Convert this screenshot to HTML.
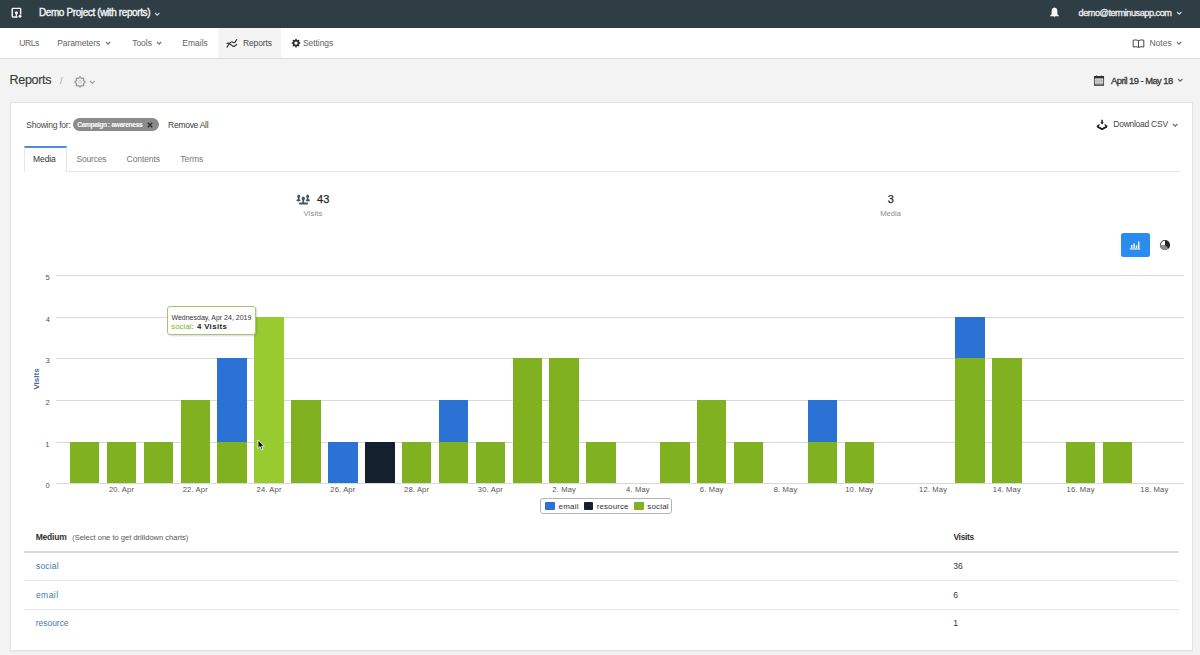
<!DOCTYPE html>
<html><head><meta charset="utf-8"><title>Reports</title>
<style>
html,body{margin:0;padding:0;}
body{width:1200px;height:655px;overflow:hidden;position:relative;background:#f3f3f3;font-family:"Liberation Sans",sans-serif;}
.t{position:absolute;white-space:nowrap;}
.b{position:absolute;}
svg.b{overflow:visible;}
</style></head><body>
<div class="b" style="left:0px;top:0px;width:1200px;height:27.6px;background:#2f3d45"></div>
<div class="b" style="left:0px;top:27.6px;width:1200px;height:30.4px;background:#ffffff"></div>
<div class="b" style="left:0px;top:58px;width:1200px;height:1px;background:#dcdcdc"></div>
<div class="b" style="left:218.2px;top:27.6px;width:63.0px;height:30.4px;background:#f4f4f4"></div>
<svg class="b" style="left:10px;top:6px" width="14" height="14" viewBox="0 0 14 14"><path d="M7.6 10.95 H2.9 Q2.25 10.95 2.25 10.3 V3 Q2.25 2.35 2.9 2.35 H10 Q10.65 2.35 10.65 3 V8.4" fill="none" stroke="#f2f4f5" stroke-width="1.45"/><circle cx="6.4" cy="6.7" r="1.55" fill="#f2f4f5"/><path d="M6.4 7 Q6.6 9 6.1 11.3" fill="none" stroke="#f2f4f5" stroke-width="1.2"/><circle cx="10.0" cy="10.2" r="1.45" fill="#f2f4f5"/></svg>
<div class="t" style="left:38.90px;top:8.00px;font-size:10px;line-height:10px;font-weight:normal;color:#eef1f3;letter-spacing:-0.387px;-webkit-text-stroke:0.4px #eef1f3;">Demo Project (with reports)</div>
<svg class="b" style="left:153.59px;top:11.50px" width="6.41" height="4.21"><path d="M1 1 L3.21 3.21 L5.41 1" fill="none" stroke="#cfd6da" stroke-width="1.1"/></svg>
<svg class="b" style="left:1049px;top:7px" width="11" height="11" viewBox="0 0 11 11"><path d="M5.5 0.6 C3.3 0.8 2.6 2.6 2.6 4.6 V7.2 L0.6 9.3 H10.4 L8.4 7.2 V4.6 C8.4 2.6 7.7 0.8 5.5 0.6 Z" fill="#f5f7f8"/><path d="M4.3 9.6 Q5.5 11.2 6.7 9.6 Z" fill="#f5f7f8"/></svg>
<div class="t" style="left:1078.53px;top:9.00px;font-size:9.2px;line-height:9.2px;font-weight:normal;color:#eef1f3;letter-spacing:-0.489px;-webkit-text-stroke:0.3px #eef1f3;">demo@terminusapp.com</div>
<svg class="b" style="left:1175.80px;top:11.30px" width="6.41" height="4.21"><path d="M1 1 L3.21 3.21 L5.41 1" fill="none" stroke="#cfd6da" stroke-width="1.1"/></svg>
<div class="t" style="left:19.16px;top:39.00px;font-size:8.5px;line-height:8.5px;font-weight:normal;color:#646464;letter-spacing:-0.372px;">URLs</div>
<div class="t" style="left:57.32px;top:39.00px;font-size:8.5px;line-height:8.5px;font-weight:normal;color:#646464;letter-spacing:-0.119px;">Parameters</div>
<svg class="b" style="left:104.60px;top:41.35px" width="6.20" height="4.10"><path d="M1 1 L3.10 3.10 L5.20 1" fill="none" stroke="#777" stroke-width="1.1"/></svg>
<div class="t" style="left:132.23px;top:39.00px;font-size:8.5px;line-height:8.5px;font-weight:normal;color:#646464;letter-spacing:-0.045px;">Tools</div>
<svg class="b" style="left:156.20px;top:41.35px" width="6.20" height="4.10"><path d="M1 1 L3.10 3.10 L5.20 1" fill="none" stroke="#777" stroke-width="1.1"/></svg>
<div class="t" style="left:182.32px;top:39.00px;font-size:8.5px;line-height:8.5px;font-weight:normal;color:#646464;letter-spacing:-0.004px;">Emails</div>
<svg class="b" style="left:222px;top:34px" width="24" height="18" viewBox="0 0 24 18"><path d="M5 13.2 L7.8 9.2 Q9.2 7.2 10.4 7.9 L11.8 8.7 Q12.6 9 13.4 7.6 L14.7 5.5" fill="none" stroke="#2e2e2e" stroke-width="1.15" stroke-linecap="round" stroke-linejoin="round"/><path d="M5 9.4 Q6.2 8.9 7.6 9.6 L10.6 12 Q11.8 12.9 12.8 12 L14.7 10.4" fill="none" stroke="#2e2e2e" stroke-width="1.15" stroke-linecap="round" stroke-linejoin="round"/></svg>
<div class="t" style="left:243.02px;top:39.00px;font-size:8.5px;line-height:8.5px;font-weight:normal;color:#4a4a4a;letter-spacing:-0.129px;">Reports</div>
<svg class="b" style="left:290px;top:37px" width="12" height="12" viewBox="0 0 12 12"><path fill-rule="evenodd" d="M10.40 6.10 L10.40 6.27 L10.39 6.45 L10.37 6.62 L10.10 6.75 L9.78 6.85 L9.45 6.93 L9.18 7.00 L9.14 7.12 L9.10 7.24 L9.05 7.36 L9.00 7.48 L8.94 7.60 L8.88 7.71 L9.02 7.95 L9.20 8.24 L9.36 8.54 L9.46 8.82 L9.35 8.96 L9.23 9.09 L9.11 9.21 L8.99 9.33 L8.86 9.45 L8.72 9.56 L8.44 9.46 L8.14 9.30 L7.85 9.12 L7.61 8.98 L7.50 9.04 L7.38 9.10 L7.26 9.15 L7.14 9.20 L7.02 9.24 L6.90 9.28 L6.83 9.55 L6.75 9.88 L6.65 10.20 L6.52 10.47 L6.35 10.49 L6.17 10.50 L6.00 10.50 L5.83 10.50 L5.65 10.49 L5.48 10.47 L5.35 10.20 L5.25 9.88 L5.17 9.55 L5.10 9.28 L4.98 9.24 L4.86 9.20 L4.74 9.15 L4.62 9.10 L4.50 9.04 L4.39 8.98 L4.15 9.12 L3.86 9.30 L3.56 9.46 L3.28 9.56 L3.14 9.45 L3.01 9.33 L2.89 9.21 L2.77 9.09 L2.65 8.96 L2.54 8.82 L2.64 8.54 L2.80 8.24 L2.98 7.95 L3.12 7.71 L3.06 7.60 L3.00 7.48 L2.95 7.36 L2.90 7.24 L2.86 7.12 L2.82 7.00 L2.55 6.93 L2.22 6.85 L1.90 6.75 L1.63 6.62 L1.61 6.45 L1.60 6.27 L1.60 6.10 L1.60 5.93 L1.61 5.75 L1.63 5.58 L1.90 5.45 L2.22 5.35 L2.55 5.27 L2.82 5.20 L2.86 5.08 L2.90 4.96 L2.95 4.84 L3.00 4.72 L3.06 4.60 L3.12 4.49 L2.98 4.25 L2.80 3.96 L2.64 3.66 L2.54 3.38 L2.65 3.24 L2.77 3.11 L2.89 2.99 L3.01 2.87 L3.14 2.75 L3.28 2.64 L3.56 2.74 L3.86 2.90 L4.15 3.08 L4.39 3.22 L4.50 3.16 L4.62 3.10 L4.74 3.05 L4.86 3.00 L4.98 2.96 L5.10 2.92 L5.17 2.65 L5.25 2.32 L5.35 2.00 L5.48 1.73 L5.65 1.71 L5.83 1.70 L6.00 1.70 L6.17 1.70 L6.35 1.71 L6.52 1.73 L6.65 2.00 L6.75 2.32 L6.83 2.65 L6.90 2.92 L7.02 2.96 L7.14 3.00 L7.26 3.05 L7.38 3.10 L7.50 3.16 L7.61 3.22 L7.85 3.08 L8.14 2.90 L8.44 2.74 L8.72 2.64 L8.86 2.75 L8.99 2.87 L9.11 2.99 L9.23 3.11 L9.35 3.24 L9.46 3.38 L9.36 3.66 L9.20 3.96 L9.02 4.25 L8.88 4.49 L8.94 4.60 L9.00 4.72 L9.05 4.84 L9.10 4.96 L9.14 5.08 L9.18 5.20 L9.45 5.27 L9.78 5.35 L10.10 5.45 L10.37 5.58 L10.39 5.75 L10.40 5.93 Z M7.7 6.1 A1.7 1.7 0 1 0 4.3 6.1 A1.7 1.7 0 1 0 7.7 6.1 Z" fill="#2e2e2e"/></svg>
<div class="t" style="left:303.02px;top:39.00px;font-size:8.5px;line-height:8.5px;font-weight:normal;color:#646464;letter-spacing:-0.078px;">Settings</div>
<svg class="b" style="left:1132px;top:39px" width="13" height="9" viewBox="0 0 13 9"><path d="M6.5 1.6 Q4 0.4 1.2 1.2 V8 Q4 7.3 6.5 8.3 Q9 7.3 11.8 8 V1.2 Q9 0.4 6.5 1.6 Z M6.5 1.6 V8.3" fill="none" stroke="#444" stroke-width="1"/></svg>
<div class="t" style="left:1149.42px;top:39.00px;font-size:8.5px;line-height:8.5px;font-weight:normal;color:#646464;letter-spacing:0.023px;">Notes</div>
<svg class="b" style="left:1176.40px;top:41.35px" width="6.20" height="4.10"><path d="M1 1 L3.10 3.10 L5.20 1" fill="none" stroke="#777" stroke-width="1.1"/></svg>
<div class="t" style="left:9.50px;top:74.00px;font-size:12.5px;line-height:12.5px;font-weight:normal;color:#3a3a3a;letter-spacing:-0.302px;-webkit-text-stroke:0.15px #3a3a3a;">Reports</div>
<div class="t" style="left:60.00px;top:77.00px;font-size:9px;line-height:9px;font-weight:normal;color:#9a9a9a;letter-spacing:0.000px;">/</div>
<svg class="b" style="left:73.6px;top:76.2px" width="12" height="12" viewBox="0 0 12 12"><path d="M11.00 6.00 L11.00 6.20 L10.98 6.39 L10.97 6.59 L10.70 6.74 L10.36 6.87 L10.03 6.97 L9.75 7.06 L9.71 7.21 L9.66 7.35 L9.60 7.49 L9.54 7.63 L9.47 7.77 L9.40 7.91 L9.53 8.17 L9.70 8.47 L9.85 8.80 L9.93 9.10 L9.80 9.25 L9.67 9.39 L9.54 9.54 L9.39 9.67 L9.25 9.80 L9.10 9.93 L8.80 9.85 L8.47 9.70 L8.17 9.53 L7.91 9.40 L7.77 9.47 L7.63 9.54 L7.49 9.60 L7.35 9.66 L7.21 9.71 L7.06 9.75 L6.97 10.03 L6.87 10.36 L6.74 10.70 L6.59 10.97 L6.39 10.98 L6.20 11.00 L6.00 11.00 L5.80 11.00 L5.61 10.98 L5.41 10.97 L5.26 10.70 L5.13 10.36 L5.03 10.03 L4.94 9.75 L4.79 9.71 L4.65 9.66 L4.51 9.60 L4.37 9.54 L4.23 9.47 L4.09 9.40 L3.83 9.53 L3.53 9.70 L3.20 9.85 L2.90 9.93 L2.75 9.80 L2.61 9.67 L2.46 9.54 L2.33 9.39 L2.20 9.25 L2.07 9.10 L2.15 8.80 L2.30 8.47 L2.47 8.17 L2.60 7.91 L2.53 7.77 L2.46 7.63 L2.40 7.49 L2.34 7.35 L2.29 7.21 L2.25 7.06 L1.97 6.97 L1.64 6.87 L1.30 6.74 L1.03 6.59 L1.02 6.39 L1.00 6.20 L1.00 6.00 L1.00 5.80 L1.02 5.61 L1.03 5.41 L1.30 5.26 L1.64 5.13 L1.97 5.03 L2.25 4.94 L2.29 4.79 L2.34 4.65 L2.40 4.51 L2.46 4.37 L2.53 4.23 L2.60 4.09 L2.47 3.83 L2.30 3.53 L2.15 3.20 L2.07 2.90 L2.20 2.75 L2.33 2.61 L2.46 2.46 L2.61 2.33 L2.75 2.20 L2.90 2.07 L3.20 2.15 L3.53 2.30 L3.83 2.47 L4.09 2.60 L4.23 2.53 L4.37 2.46 L4.51 2.40 L4.65 2.34 L4.79 2.29 L4.94 2.25 L5.03 1.97 L5.13 1.64 L5.26 1.30 L5.41 1.03 L5.61 1.02 L5.80 1.00 L6.00 1.00 L6.20 1.00 L6.39 1.02 L6.59 1.03 L6.74 1.30 L6.87 1.64 L6.97 1.97 L7.06 2.25 L7.21 2.29 L7.35 2.34 L7.49 2.40 L7.63 2.46 L7.77 2.53 L7.91 2.60 L8.17 2.47 L8.47 2.30 L8.80 2.15 L9.10 2.07 L9.25 2.20 L9.39 2.33 L9.54 2.46 L9.67 2.61 L9.80 2.75 L9.93 2.90 L9.85 3.20 L9.70 3.53 L9.53 3.83 L9.40 4.09 L9.47 4.23 L9.54 4.37 L9.60 4.51 L9.66 4.65 L9.71 4.79 L9.75 4.94 L10.03 5.03 L10.36 5.13 L10.70 5.26 L10.97 5.41 L10.98 5.61 L11.00 5.80 Z" fill="none" stroke="#969696" stroke-width="1.15"/><circle cx="6" cy="6" r="1.3" fill="none" stroke="#c4c4c4" stroke-width="0.8"/></svg>
<svg class="b" style="left:88.59px;top:80.05px" width="6.62" height="4.31"><path d="M1 1 L3.31 3.31 L5.62 1" fill="none" stroke="#9a9a9a" stroke-width="1.1"/></svg>
<svg class="b" style="left:1093px;top:74.5px" width="12" height="11" viewBox="0 0 12 11"><rect x="1.4" y="1.6" width="9.2" height="8.6" fill="none" stroke="#3a3a3a" stroke-width="0.9"/><rect x="1" y="1.1" width="10" height="2.3" fill="#2e2e2e"/><rect x="1" y="9.4" width="10" height="1.1" fill="#3a3a3a"/><path d="M1.5 5.1 H10.5 M1.5 6.9 H10.5 M1.5 8.6 H10.5" stroke="#8a8a8a" stroke-width="0.75"/><path d="M3.8 3.5 V9.5 M6 3.5 V9.5 M8.2 3.5 V9.5" stroke="#b0b0b0" stroke-width="0.5"/><rect x="3.1" y="0.5" width="1.1" height="1.2" fill="#3a3a3a"/><rect x="7.8" y="0.5" width="1.1" height="1.2" fill="#3a3a3a"/></svg>
<div class="t" style="left:1111.00px;top:76.00px;font-size:9.4px;line-height:9.4px;font-weight:normal;color:#383838;letter-spacing:-0.543px;-webkit-text-stroke:0.3px #383838;">April 19 - May 18</div>
<svg class="b" style="left:1177.30px;top:78.40px" width="6.41" height="4.21"><path d="M1 1 L3.21 3.21 L5.41 1" fill="none" stroke="#666" stroke-width="1.1"/></svg>
<div class="b" style="left:10px;top:102px;width:1183.4px;height:549px;background:#fff;border:1px solid #e4e4e4;box-sizing:border-box;box-shadow:0 1px 1px rgba(0,0,0,0.04)"></div>
<div class="t" style="left:26.32px;top:121.00px;font-size:8.5px;line-height:8.5px;font-weight:normal;color:#4a4a4a;letter-spacing:-0.252px;">Showing for:</div>
<div class="b" style="left:73px;top:118.3px;width:86.19999999999999px;height:12.500000000000014px;background:#8b8b8b;border-radius:7px"></div>
<div class="t" style="left:77.24px;top:122.00px;font-size:6.6px;line-height:6.6px;font-weight:bold;color:#f4f4f4;letter-spacing:-0.315px;-webkit-text-stroke:0.15px #f4f4f4;">Campaign : awareness</div>
<svg class="b" style="left:147px;top:121.5px" width="6" height="6" viewBox="0 0 6 6"><path d="M0.8 0.8 L5.2 5.2 M5.2 0.8 L0.8 5.2" stroke="#2c2c2c" stroke-width="1.3"/></svg>
<div class="t" style="left:168.12px;top:121.00px;font-size:8.5px;line-height:8.5px;font-weight:normal;color:#3a3a3a;letter-spacing:-0.282px;">Remove All</div>
<svg class="b" style="left:1096px;top:118px" width="13" height="12" viewBox="0 0 13 12"><path d="M6.1 1.8 V5" stroke="#1e1e1e" stroke-width="1.5"/><path d="M4.3 4.2 L6.1 6.4 L7.9 4.2 Z" fill="#1e1e1e"/><path d="M3.6 6.5 L1.2 8.3 L6.1 11 L11 8.3 L8.6 6.5" fill="none" stroke="#1e1e1e" stroke-width="1.2" stroke-linejoin="round"/><path d="M1.4 8.8 L6.1 11.2 L10.8 8.8" fill="none" stroke="#1e1e1e" stroke-width="1.6" stroke-linejoin="round"/></svg>
<div class="t" style="left:1113.32px;top:120.00px;font-size:8.5px;line-height:8.5px;font-weight:normal;color:#444;letter-spacing:-0.264px;">Download CSV</div>
<svg class="b" style="left:1172.10px;top:122.50px" width="6.41" height="4.21"><path d="M1 1 L3.21 3.21 L5.41 1" fill="none" stroke="#666" stroke-width="1.1"/></svg>
<div class="b" style="left:66.3px;top:170.8px;width:1114.1000000000001px;height:1.0px;background:#e6e6e6"></div>
<div class="b" style="left:23.7px;top:146.2px;width:43.099999999999994px;height:25.600000000000023px;background:#fff;border-left:1px solid #e6e6e6;border-right:1px solid #e6e6e6;border-top:2px solid #4a8fdc;box-sizing:border-box"></div>
<div class="t" style="left:33.12px;top:155.00px;font-size:8.5px;line-height:8.5px;font-weight:normal;color:#333;letter-spacing:-0.121px;">Media</div>
<div class="t" style="left:76.62px;top:155.00px;font-size:8.5px;line-height:8.5px;font-weight:normal;color:#777;letter-spacing:-0.219px;">Sources</div>
<div class="t" style="left:126.58px;top:155.00px;font-size:8.5px;line-height:8.5px;font-weight:normal;color:#777;letter-spacing:-0.089px;">Contents</div>
<div class="t" style="left:180.33px;top:155.00px;font-size:8.5px;line-height:8.5px;font-weight:normal;color:#777;letter-spacing:-0.038px;">Terms</div>
<svg class="b" style="left:296px;top:194px" width="15" height="11" viewBox="0 0 15 11"><g fill="#435961"><ellipse cx="2.7" cy="2.4" rx="1.45" ry="1.8"/><rect x="1.9" y="3.6" width="1.6" height="2.4"/><ellipse cx="2.5" cy="6.3" rx="2.2" ry="1.1"/><ellipse cx="11.65" cy="2.4" rx="1.45" ry="1.8"/><rect x="10.85" y="3.6" width="1.6" height="2.4"/><ellipse cx="11.85" cy="6.3" rx="2.2" ry="1.1"/><ellipse cx="7.25" cy="4.5" rx="1.65" ry="2.0"/><rect x="6.4" y="6" width="1.7" height="3"/><rect x="3.0" y="8.5" width="9.0" height="1.9" rx="0.9"/></g></svg>
<div class="t" style="left:316.88px;top:194.00px;font-size:11px;line-height:11px;font-weight:normal;color:#262626;letter-spacing:0.250px;-webkit-text-stroke:0.25px #262626;">43</div>
<div class="t" style="left:303.46px;top:210.00px;font-size:7.5px;line-height:7.5px;font-weight:normal;color:#8a8a8a;letter-spacing:0.225px;">Visits</div>
<div class="t" style="left:887.66px;top:194.00px;font-size:11px;line-height:11px;font-weight:normal;color:#262626;letter-spacing:0.000px;-webkit-text-stroke:0.25px #262626;">3</div>
<div class="t" style="left:880.20px;top:210.00px;font-size:7.5px;line-height:7.5px;font-weight:normal;color:#8a8a8a;letter-spacing:0.066px;">Media</div>
<div class="b" style="left:1120.8px;top:233px;width:28.799999999999955px;height:23.80000000000001px;background:#2a8cee;border-radius:2.5px"></div>
<svg class="b" style="left:1129px;top:239px" width="12" height="11" viewBox="0 0 12 11"><g fill="#fff"><rect x="2" y="6" width="1.4" height="3"/><rect x="4.4" y="4.5" width="1.4" height="4.5"/><rect x="6.8" y="6.4" width="1.4" height="2.6"/><rect x="9" y="2.6" width="1.4" height="6.4"/><rect x="0.8" y="9.4" width="10.4" height="1.1"/></g></svg>
<svg class="b" style="left:1159.2px;top:238.9px" width="12" height="12" viewBox="0 0 12 12"><circle cx="6" cy="6" r="5.1" fill="#262626"/><path d="M6 6 L9.6 9.6 A5.1 5.1 0 0 1 0.9 6 Z" fill="#8c8c8c"/><path d="M6 6 H1.7 A4.3 4.3 0 0 1 6 1.7 Z" fill="#fdfdfd"/></svg>
<div class="b" style="left:55.6px;top:483px;width:1128.2px;height:1px;background:#d9d9d9"></div>
<div class="t" style="left:45.50px;top:482.00px;font-size:7.6px;line-height:7.6px;font-weight:normal;color:#505050;letter-spacing:0.000px;">0</div>
<div class="b" style="left:55.6px;top:442px;width:1128.2px;height:1px;background:#d9d9d9"></div>
<div class="t" style="left:45.23px;top:441.00px;font-size:7.6px;line-height:7.6px;font-weight:normal;color:#505050;letter-spacing:0.000px;">1</div>
<div class="b" style="left:55.6px;top:400px;width:1128.2px;height:1px;background:#d9d9d9"></div>
<div class="t" style="left:45.42px;top:399.00px;font-size:7.6px;line-height:7.6px;font-weight:normal;color:#505050;letter-spacing:0.000px;">2</div>
<div class="b" style="left:55.6px;top:358px;width:1128.2px;height:1px;background:#d9d9d9"></div>
<div class="t" style="left:45.50px;top:357.00px;font-size:7.6px;line-height:7.6px;font-weight:normal;color:#505050;letter-spacing:0.000px;">3</div>
<div class="b" style="left:55.6px;top:317px;width:1128.2px;height:1px;background:#d9d9d9"></div>
<div class="t" style="left:45.65px;top:316.00px;font-size:7.6px;line-height:7.6px;font-weight:normal;color:#505050;letter-spacing:0.000px;">4</div>
<div class="b" style="left:55.6px;top:275px;width:1128.2px;height:1px;background:#d9d9d9"></div>
<div class="t" style="left:45.50px;top:274.00px;font-size:7.6px;line-height:7.6px;font-weight:normal;color:#505050;letter-spacing:0.000px;">5</div>
<div class="b" style="left:69.9px;top:442px;width:29.5px;height:41px;background:#80b120"></div>
<div class="b" style="left:106.79px;top:442px;width:29.499999999999986px;height:41px;background:#80b120"></div>
<div class="b" style="left:143.67px;top:442px;width:29.5px;height:41px;background:#80b120"></div>
<div class="b" style="left:180.56px;top:400px;width:29.5px;height:83px;background:#80b120"></div>
<div class="b" style="left:217.45px;top:442px;width:29.5px;height:41px;background:#80b120"></div>
<div class="b" style="left:217.45px;top:358px;width:29.5px;height:84px;background:#2a73d5"></div>
<div class="b" style="left:254.34px;top:317px;width:29.49999999999997px;height:166px;background:#98cb30"></div>
<div class="b" style="left:291.22px;top:400px;width:29.5px;height:83px;background:#80b120"></div>
<div class="b" style="left:328.11px;top:442px;width:29.5px;height:41px;background:#2a73d5"></div>
<div class="b" style="left:365.0px;top:442px;width:29.5px;height:41px;background:#15202e"></div>
<div class="b" style="left:401.88px;top:442px;width:29.5px;height:41px;background:#80b120"></div>
<div class="b" style="left:438.77px;top:442px;width:29.5px;height:41px;background:#80b120"></div>
<div class="b" style="left:438.77px;top:400px;width:29.5px;height:42px;background:#2a73d5"></div>
<div class="b" style="left:475.66px;top:442px;width:29.5px;height:41px;background:#80b120"></div>
<div class="b" style="left:512.54px;top:358px;width:29.5px;height:125px;background:#80b120"></div>
<div class="b" style="left:549.43px;top:358px;width:29.5px;height:125px;background:#80b120"></div>
<div class="b" style="left:586.32px;top:442px;width:29.5px;height:41px;background:#80b120"></div>
<div class="b" style="left:660.09px;top:442px;width:29.5px;height:41px;background:#80b120"></div>
<div class="b" style="left:696.98px;top:400px;width:29.5px;height:83px;background:#80b120"></div>
<div class="b" style="left:733.87px;top:442px;width:29.5px;height:41px;background:#80b120"></div>
<div class="b" style="left:807.64px;top:442px;width:29.5px;height:41px;background:#80b120"></div>
<div class="b" style="left:807.64px;top:400px;width:29.5px;height:42px;background:#2a73d5"></div>
<div class="b" style="left:844.53px;top:442px;width:29.5px;height:41px;background:#80b120"></div>
<div class="b" style="left:955.19px;top:358px;width:29.5px;height:125px;background:#80b120"></div>
<div class="b" style="left:955.19px;top:317px;width:29.5px;height:41px;background:#2a73d5"></div>
<div class="b" style="left:992.07px;top:358px;width:29.5px;height:125px;background:#80b120"></div>
<div class="b" style="left:1065.85px;top:442px;width:29.5px;height:41px;background:#80b120"></div>
<div class="b" style="left:1102.74px;top:442px;width:29.5px;height:41px;background:#80b120"></div>
<div class="t" style="left:81.54px;top:486.14px;width:80px;text-align:center;font-size:7.6px;line-height:7.6px;color:#555;letter-spacing:0.15px">20. Apr</div>
<div class="t" style="left:155.31px;top:486.14px;width:80px;text-align:center;font-size:7.6px;line-height:7.6px;color:#555;letter-spacing:0.15px">22. Apr</div>
<div class="t" style="left:229.09px;top:486.14px;width:80px;text-align:center;font-size:7.6px;line-height:7.6px;color:#555;letter-spacing:0.15px">24. Apr</div>
<div class="t" style="left:302.86px;top:486.14px;width:80px;text-align:center;font-size:7.6px;line-height:7.6px;color:#555;letter-spacing:0.15px">26. Apr</div>
<div class="t" style="left:376.63px;top:486.14px;width:80px;text-align:center;font-size:7.6px;line-height:7.6px;color:#555;letter-spacing:0.15px">28. Apr</div>
<div class="t" style="left:450.41px;top:486.14px;width:80px;text-align:center;font-size:7.6px;line-height:7.6px;color:#555;letter-spacing:0.15px">30. Apr</div>
<div class="t" style="left:524.18px;top:486.14px;width:80px;text-align:center;font-size:7.6px;line-height:7.6px;color:#555;letter-spacing:0.15px">2. May</div>
<div class="t" style="left:597.96px;top:486.14px;width:80px;text-align:center;font-size:7.6px;line-height:7.6px;color:#555;letter-spacing:0.15px">4. May</div>
<div class="t" style="left:671.73px;top:486.14px;width:80px;text-align:center;font-size:7.6px;line-height:7.6px;color:#555;letter-spacing:0.15px">6. May</div>
<div class="t" style="left:745.50px;top:486.14px;width:80px;text-align:center;font-size:7.6px;line-height:7.6px;color:#555;letter-spacing:0.15px">8. May</div>
<div class="t" style="left:819.28px;top:486.14px;width:80px;text-align:center;font-size:7.6px;line-height:7.6px;color:#555;letter-spacing:0.15px">10. May</div>
<div class="t" style="left:893.05px;top:486.14px;width:80px;text-align:center;font-size:7.6px;line-height:7.6px;color:#555;letter-spacing:0.15px">12. May</div>
<div class="t" style="left:966.82px;top:486.14px;width:80px;text-align:center;font-size:7.6px;line-height:7.6px;color:#555;letter-spacing:0.15px">14. May</div>
<div class="t" style="left:1040.60px;top:486.14px;width:80px;text-align:center;font-size:7.6px;line-height:7.6px;color:#555;letter-spacing:0.15px">16. May</div>
<div class="t" style="left:1114.37px;top:486.14px;width:80px;text-align:center;font-size:7.6px;line-height:7.6px;color:#555;letter-spacing:0.15px">18. May</div>
<div class="t" style="left:16.7px;top:375px;width:40px;text-align:center;font-size:8px;line-height:8px;font-weight:bold;color:#4a6890;transform:rotate(-90deg);transform-origin:20px 4px">Visits</div>
<div class="b" style="left:540.3px;top:497.8px;width:132.20000000000005px;height:16.19999999999999px;border:1px solid #b5b5b5;border-radius:3px;box-sizing:border-box;background:#fff"></div>
<div class="b" style="left:545px;top:502px;width:10px;height:7.800000000000011px;background:#2a73d5;border-radius:1px"></div>
<div class="t" style="left:558.48px;top:503.00px;font-size:8px;line-height:8px;font-weight:normal;color:#333;letter-spacing:0.255px;">email</div>
<div class="b" style="left:583.5px;top:502px;width:9.799999999999955px;height:7.800000000000011px;background:#15202e;border-radius:1px"></div>
<div class="t" style="left:596.78px;top:503.00px;font-size:8px;line-height:8px;font-weight:normal;color:#333;letter-spacing:0.080px;">resource</div>
<div class="b" style="left:633.8px;top:502px;width:10.0px;height:7.800000000000011px;background:#80b120;border-radius:1px"></div>
<div class="t" style="left:647.26px;top:503.00px;font-size:8px;line-height:8px;font-weight:normal;color:#333;letter-spacing:0.184px;">social</div>
<div class="b" style="left:166.7px;top:306.3px;width:89.5px;height:28.899999999999977px;background:rgba(255,255,255,0.93);border:1px solid #a9c46e;border-radius:3px;box-sizing:border-box;box-shadow:1px 1px 2px rgba(0,0,0,0.15)"></div>
<div class="t" style="left:171.47px;top:314.00px;font-size:7px;line-height:7px;font-weight:normal;color:#333;letter-spacing:-0.002px;">Wednesday, Apr 24, 2019</div>
<div class="t" style="left:171.27px;top:323.00px;font-size:7.8px;line-height:7.8px;font-weight:normal;color:#7fae2a;letter-spacing:0.062px;">social</div>
<div class="t" style="left:191.50px;top:323.00px;font-size:7.8px;line-height:7.8px;font-weight:normal;color:#555;letter-spacing:0.000px;">:</div>
<div class="t" style="left:196.88px;top:323.00px;font-size:7.8px;line-height:7.8px;font-weight:bold;color:#222;letter-spacing:0.392px;">4 Visits</div>
<svg class="b" style="left:257px;top:439px" width="9" height="12" viewBox="0 0 9 12"><path d="M1 1 V9.5 L3 7.6 L4.6 11 L6 10.4 L4.5 7.2 H7.3 Z" fill="#111" stroke="#fff" stroke-width="0.8"/></svg>
<div class="t" style="left:35.75px;top:533.00px;font-size:8.5px;line-height:8.5px;font-weight:bold;color:#333;letter-spacing:-0.233px;">Medium</div>
<div class="t" style="left:72.15px;top:534.00px;font-size:7.5px;line-height:7.5px;font-weight:normal;color:#555;letter-spacing:0.021px;">(Select one to get drilldown charts)</div>
<div class="t" style="left:953.46px;top:533.00px;font-size:8.5px;line-height:8.5px;font-weight:bold;color:#333;letter-spacing:-0.349px;">Visits</div>
<div class="b" style="left:24.2px;top:551.3px;width:1155.2px;height:1.7000000000000455px;background:#d9d9d9"></div>
<div class="b" style="left:24.2px;top:579.7px;width:1155.2px;height:1.0px;background:#e6e6e6"></div>
<div class="b" style="left:24.2px;top:608.5px;width:1155.2px;height:1.0px;background:#e6e6e6"></div>
<div class="t" style="left:36.04px;top:562.00px;font-size:8.5px;line-height:8.5px;font-weight:normal;color:#4279b4;letter-spacing:0.178px;">social</div>
<div class="t" style="left:953.26px;top:562.00px;font-size:8.5px;line-height:8.5px;font-weight:normal;color:#333;letter-spacing:-0.055px;">36</div>
<div class="t" style="left:35.96px;top:591.00px;font-size:8.5px;line-height:8.5px;font-weight:normal;color:#4279b4;letter-spacing:0.444px;">email</div>
<div class="t" style="left:953.18px;top:591.00px;font-size:8.5px;line-height:8.5px;font-weight:normal;color:#333;letter-spacing:0.000px;">6</div>
<div class="t" style="left:35.75px;top:619.00px;font-size:8.5px;line-height:8.5px;font-weight:normal;color:#4279b4;letter-spacing:-0.033px;">resource</div>
<div class="t" style="left:953.16px;top:619.00px;font-size:8.5px;line-height:8.5px;font-weight:normal;color:#333;letter-spacing:0.000px;">1</div>
</body></html>
